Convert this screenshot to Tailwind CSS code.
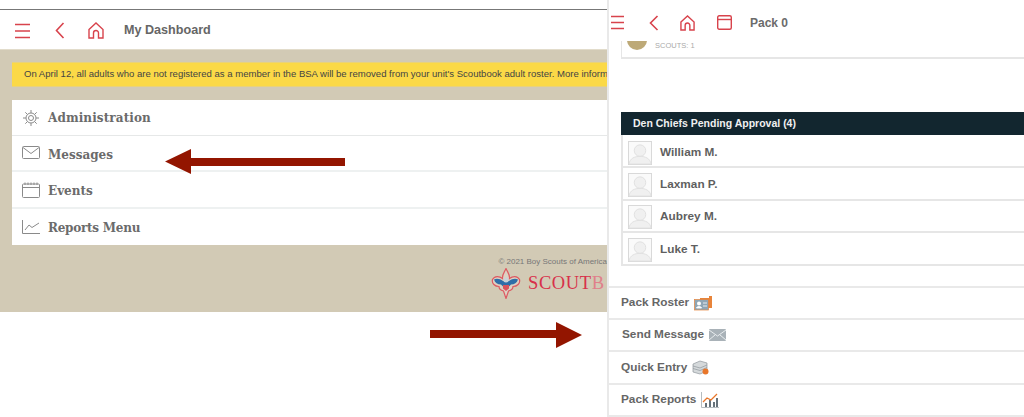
<!DOCTYPE html>
<html>
<head>
<meta charset="utf-8">
<script src="https://cdn.jsdelivr.net/npm/@tailwindcss/browser@4"></script>
</head>
<body class="bg-white">
<div class="relative flex w-[1024px] h-[417px] overflow-hidden bg-white font-['Liberation_Sans',sans-serif]">

  <!-- LEFT PANEL -->
  <div class="w-[607px] shrink-0 flex flex-col">
    <div class="h-[10px] shrink-0 border-b border-[#777]"></div>
    <div class="h-[39px] shrink-0 flex items-center pl-[15px] pt-[2px] text-[#d8434c]">
      <svg class="w-[15px] h-[16px]" viewBox="0 0 15 16" fill="none" stroke="currentColor" stroke-width="1.5"><path d="M0 1.5h15M0 8h15M0 14.5h15"/></svg>
      <svg class="ml-[25px] w-[10px] h-[17px]" viewBox="0 0 10 17" fill="none" stroke="currentColor" stroke-width="1.6"><path d="M8.5 1 1.500 8.500l7 7.500"/></svg>
      <svg class="ml-[23px] w-[16px] h-[17px]" viewBox="0 0 16 17" fill="none" stroke="currentColor" stroke-width="1.4"><path d="M1 7.500 8 1l7 6.500V16h-4.500v-5a2.500 2.500 0 0 0-5 0v5H1z"/></svg>
      <span class="ml-[20px] text-[12.6px] font-bold text-[#666]">My Dashboard</span>
    </div>
    <div class="h-[263px] shrink-0 bg-[#d2cab5] pl-[12px] pt-[12px] flex flex-col border-t border-[#e2dccb]">
      <div class="h-[25px] shrink-0 bg-[#fbd947] border-y border-[#e9d27a] flex items-center pl-[12px] overflow-hidden whitespace-nowrap text-[9.55px] text-[#444]">On April 12, all adults who are not registered as a member in the BSA will be removed from your unit's Scoutbook adult roster. More inform</div>
      <div class="mt-[13px] h-[145px] shrink-0 bg-white flex flex-col font-['DejaVu_Serif',serif] font-bold text-[12px] text-[#6b6b6b]">
        <div class="h-[36px] flex items-center border-b border-[#e6e8e8] pl-[10px]">
          <svg class="w-[18px] h-[18px]" viewBox="0 0 18 18" fill="none" stroke="#8a8a8a" stroke-width="1"><circle cx="9" cy="9" r="5"/><circle cx="9" cy="9" r="2.500"/><path d="M9 1v3M9 14v3M1 9h3M14 9h3M3.300 3.300l2.100 2.100M12.600 12.600l2.100 2.100M14.700 3.300l-2.100 2.100M5.400 12.600l-2.100 2.100"/></svg>
          <span class="ml-[8px] mt-[1px] tracking-[0.1px]">Administration</span>
        </div>
        <div class="h-[36px] flex items-center border-b-2 border-[#eef1f1] pl-[10px]">
          <svg class="w-[18px] h-[14px]" viewBox="0 0 18 14" fill="none" stroke="#8a8a8a" stroke-width="1"><rect x=".5" y=".5" width="17" height="12" rx="1"/><path d="M1 1.500 9 7.500l8-6"/></svg>
          <span class="ml-[8px] mt-[3px]">Messages</span>
        </div>
        <div class="h-[37px] flex items-center border-b-2 border-[#eef1f1] pl-[10px]">
          <svg class="w-[18px] h-[16px] mt-[1px]" viewBox="0 0 18 16" fill="none" stroke="#8a8a8a" stroke-width="1"><rect x=".5" y="2" width="17" height="13.500" rx="1"/><path d="M.5 5.500h17"/><path d="M3 .5v2.500M6 .5v2.500M9 .5v2.500M12 .5v2.500M15 .5v2.500"/></svg>
          <span class="ml-[8px] mt-[2px]">Events</span>
        </div>
        <div class="h-[36px] flex items-center pl-[10px]">
          <svg class="w-[18px] h-[14px]" viewBox="0 0 18 14" fill="none" stroke="#8a8a8a" stroke-width="1"><path d="M.5 0v13.500H18"/><path d="M3 10l4-5 3 2.500L17 3"/></svg>
          <span class="ml-[8px] mt-[1px] tracking-[-0.25px]">Reports Menu</span>
        </div>
      </div>
      <div class="mt-[12px] text-right text-[8px] leading-[10px] text-[#777] whitespace-nowrap">© 2021 Boy Scouts of America</div>
      <div class="h-[32px] flex items-center justify-end overflow-hidden">
        <svg class="w-[30px] h-[31px] mr-[7px] shrink-0" viewBox="0 0 30 31">
          <path d="M15 .5c-1.500 3.500-4 6-3.500 10-3-2.500-8-3-10 1-1 4 2.500 7 6.500 7 0 3 2.500 4 4.500 4.500L15 30.500l2.500-7.500c2-.5 4.500-1.500 4.500-4.500 4 0 7.500-3 6.500-7-2-4-7-3.500-10-1 .5-4-2-6.500-3.500-10z" fill="#f3dfdc" fill-opacity=".35" stroke="#dd5a62" stroke-width="1.200"/>
          <path d="M3 11.500c3-1.500 6-.5 9 1.500l3 1 3-1c3-2 6-3 9-1.500-1 3.500-3.500 5-7 5l-3 3h-4l-3-3c-3.500 0-6-1.500-7-5z" fill="#2f6ea8"/>
          <circle cx="15" cy="12" r="2.500" fill="#c9d3da"/>
          <path d="M12 17h6v3.500L15 23l-3-2.500z" fill="#d9545c"/>
        </svg>
        <div class="w-[79px] pt-[1px] whitespace-nowrap font-['Liberation_Serif',serif] text-[18.5px] leading-none tracking-[0.6px] text-[#d8304a] shrink-0">SCOUT<span class="text-[#e0808a]">B</span></div>
      </div>
    </div>
  </div>

  <!-- RIGHT PANEL -->
  <div class="flex-1 flex flex-col border-l-2 border-[#e9e9e9] min-w-0">
    <div class="h-[41px] shrink-0 flex items-center pl-[2px] pt-[4px] text-[#d8434c]">
      <svg class="w-[13px] h-[15px]" viewBox="0 0 13 15" fill="none" stroke="currentColor" stroke-width="1.500"><path d="M0 1.500h13M0 7.500h13M0 13.500h13"/></svg>
      <svg class="ml-[25px] w-[10px] h-[16px]" viewBox="0 0 10 16" fill="none" stroke="currentColor" stroke-width="1.600"><path d="M8.500 1 1.500 8l7 7"/></svg>
      <svg class="ml-[21px] w-[15px] h-[16px]" viewBox="0 0 16 17" fill="none" stroke="currentColor" stroke-width="1.500"><path d="M1 7.500 8 1l7 6.500V16h-4.500v-5a2.500 2.500 0 0 0-5 0v5H1z"/></svg>
      <svg class="ml-[22px] w-[15px] h-[15px]" viewBox="0 0 15 15" fill="none" stroke="currentColor" stroke-width="1.400"><rect x=".7" y=".7" width="13.600" height="13.600" rx="1.500"/><path d="M.7 4.500h13.600"/></svg>
      <span class="ml-[18px] text-[12px] font-bold text-[#6b6b6b]">Pack 0</span>
    </div>
    <div class="h-[18px] shrink-0 ml-[12px] border-l border-b-2 border-[#e6e6e6] flex overflow-hidden pl-[5px]">
      <div class="w-[20px] h-[20px] rounded-full bg-[#bda977] -mt-[11px] shrink-0"></div>
      <span class="ml-[8px] text-[7.5px] leading-[10px] text-[#aaa] whitespace-nowrap">SCOUTS: 1</span>
    </div>
    <div class="h-[53px] shrink-0"></div>
    <div class="h-[23px] shrink-0 ml-[12px] bg-[#12262f] flex items-center pl-[12px] text-[10.5px] font-bold text-[#f0f0f0]">Den Chiefs Pending Approval (4)</div>
    <div class="shrink-0 ml-[12px] border-l-2 border-[#e6e6e6] flex flex-col text-[11.8px] font-bold text-[#5f5f5f]">
      <div class="h-[33px] border-b-2 border-[#e6e6e6] flex items-center pl-[5px] pt-[4px]">
        <svg class="w-[24px] h-[24px] shrink-0" viewBox="0 0 25 25"><rect x=".5" y=".5" width="24" height="24" fill="#fafafa" stroke="#d8d8d8"/><circle cx="12.500" cy="10" r="6" fill="#f0f0f0" stroke="#e0e0e0"/><path d="M1 24c1-6 6-8 11.500-8S23 18 24 24z" fill="#f0f0f0" stroke="#e0e0e0"/></svg>
        <span class="ml-[8px]">William M.</span>
      </div>
      <div class="h-[33px] border-b-2 border-[#e6e6e6] flex items-center pl-[5px] pt-[2px]">
        <svg class="w-[24px] h-[24px] shrink-0" viewBox="0 0 25 25"><rect x=".5" y=".5" width="24" height="24" fill="#fafafa" stroke="#d8d8d8"/><circle cx="12.500" cy="10" r="6" fill="#f0f0f0" stroke="#e0e0e0"/><path d="M1 24c1-6 6-8 11.500-8S23 18 24 24z" fill="#f0f0f0" stroke="#e0e0e0"/></svg>
        <span class="ml-[8px]">Laxman P.</span>
      </div>
      <div class="h-[32px] border-b-2 border-[#e6e6e6] flex items-center pl-[5px] pt-[2px]">
        <svg class="w-[24px] h-[24px] shrink-0" viewBox="0 0 25 25"><rect x=".5" y=".5" width="24" height="24" fill="#fafafa" stroke="#d8d8d8"/><circle cx="12.500" cy="10" r="6" fill="#f0f0f0" stroke="#e0e0e0"/><path d="M1 24c1-6 6-8 11.500-8S23 18 24 24z" fill="#f0f0f0" stroke="#e0e0e0"/></svg>
        <span class="ml-[8px]">Aubrey M.</span>
      </div>
      <div class="h-[33px] border-b-2 border-[#e6e6e6] flex items-center pl-[5px] pt-[2px]">
        <svg class="w-[24px] h-[24px] shrink-0" viewBox="0 0 25 25"><rect x=".5" y=".5" width="24" height="24" fill="#fafafa" stroke="#d8d8d8"/><circle cx="12.500" cy="10" r="6" fill="#f0f0f0" stroke="#e0e0e0"/><path d="M1 24c1-6 6-8 11.500-8S23 18 24 24z" fill="#f0f0f0" stroke="#e0e0e0"/></svg>
        <span class="ml-[8px]">Luke T.</span>
      </div>
    </div>
    <div class="h-[22px] shrink-0 border-b-2 border-[#e9e9e9]"></div>
    <div class="flex flex-col text-[11.8px] font-bold text-[#666]">
      <div class="h-[32px] border-b-2 border-[#e9e9e9] flex items-center pl-[12px]">
        <span>Pack Roster</span>
        <svg class="ml-[5px] w-[18px] h-[15px]" viewBox="0 0 18 15"><path d="M6 2h9V0h3v12H6z" fill="#e8843a"/><rect x=".5" y="3.500" width="14" height="10.500" fill="#8fa6b5" stroke="#e8843a" stroke-width=".7"/><circle cx="5" cy="7.500" r="2" fill="#fff"/><path d="M2.500 12c0-2 5-2 5 0zM9 7h4M9 10h4" fill="#fff" stroke="#fff" stroke-width=".8"/></svg>
      </div>
      <div class="h-[32px] border-b-2 border-[#e9e9e9] flex items-center pl-[13px]">
        <span>Send Message</span>
        <svg class="ml-[5px] w-[17px] h-[12px]" viewBox="0 0 17 12"><rect width="17" height="12" rx="1" fill="#a9b2b8"/><path d="M0 1l8.500 6L17 1M0 11l6-5M17 11l-6-5" stroke="#e8ecee" fill="none"/></svg>
      </div>
      <div class="h-[33px] border-b-2 border-[#e9e9e9] flex items-center pl-[12px]">
        <span>Quick Entry</span>
        <svg class="ml-[5px] w-[17px] h-[15px]" viewBox="0 0 17 15"><path d="M1 4l7-3 7 2v8l-7 3-7-2z" fill="#d5d9db" stroke="#8f979c" stroke-width=".7"/><path d="M1 6l7 2 7-3M1 8.500l7 2 7-3" stroke="#8f979c" fill="none" stroke-width=".7"/><circle cx="13.500" cy="11.500" r="3" fill="#e8762a"/></svg>
      </div>
      <div class="h-[32px] border-b-2 border-[#e9e9e9] flex items-center pl-[12px]">
        <span>Pack Reports</span>
        <svg class="ml-[5px] w-[18px] h-[16px]" viewBox="0 0 18 16"><path d="M.5 0v15.500H18" stroke="#b5bcc0" fill="none"/><path d="M4 15V11h2v4zM8 15V8h2v7zM12 15V10h2v5zM15 15V6h2v9z" fill="#66727a"/><path d="M2 10l4-4 4 2 6-6" stroke="#e8762a" stroke-width="1.300" fill="none"/></svg>
      </div>
    </div>
  </div>

  <!-- ARROW ANNOTATIONS -->
  <svg class="absolute left-[160px] top-[146px] w-[190px] h-[32px]" viewBox="0 0 190 32"><path d="M5 15.500 31 3v9h154v8H31v8z" fill="#931500"/></svg>
  <svg class="absolute left-[425px] top-[318px] w-[165px] h-[36px]" viewBox="0 0 165 36"><path d="M5 12h126V4l26 13-26 13v-10H5z" fill="#931500"/></svg>
</div>
</body>
</html>
